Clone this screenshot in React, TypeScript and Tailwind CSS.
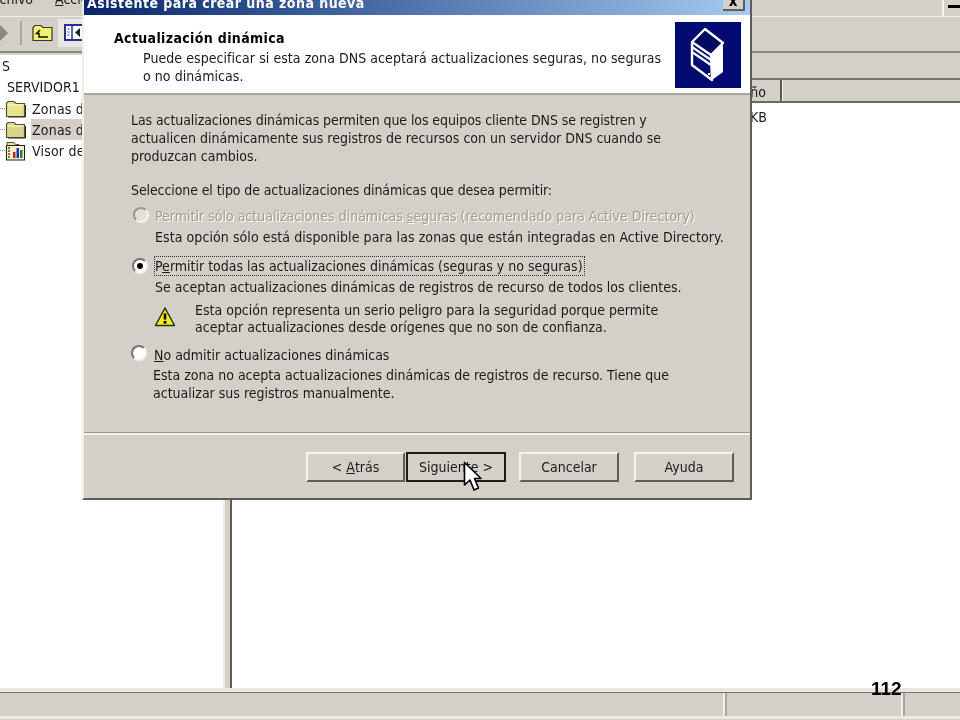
const face = "font-['DejaVu_Sans',sans-serif] [font-stretch:condensed]";

function Folder({ selected }: { selected?: boolean }) {
  return (
    <svg width="21" height="18" viewBox="0 0 21 18" className="shrink-0">
      <path d="M1.5 16.5V3.5L3 1.5h6l2 2h8.5v13z" fill={selected ? '#d8d68a' : '#e6e48c'} stroke="#55533a" strokeWidth="1.2" />
      <path d="M2.5 5h16" stroke="#f8f7c8" strokeWidth="1.2" />
      <path d="M20.5 5v12H3" stroke="#2c2b22" strokeWidth="1" fill="none" />
    </svg>
  );
}

function LogIcon() {
  return (
    <svg width="21" height="20" viewBox="0 0 21 20" className="shrink-0">
      <path d="M2 5V1.5h7l1.5 2H14V5" fill="#e6e48c" stroke="#55533a" />
      <rect x="1.5" y="4.5" width="18" height="14.5" fill="#f4f1d2" stroke="#222" />
      <path d="M4 6v12" stroke="#7c7a2a" strokeWidth="2" strokeDasharray="2 1" />
      <rect x="8" y="11" width="2.5" height="6" fill="#c02020" />
      <rect x="11.5" y="7" width="2.5" height="10" fill="#2030b0" />
      <rect x="15" y="9" width="2.5" height="8" fill="#208040" />
    </svg>
  );
}

function TreeRow({ label, icon, selected }: { label: string; icon: React.ReactNode; selected?: boolean }) {
  return (
    <div className="flex h-[21px] items-center">
      <span className="w-[5px] shrink-0 border-t border-dotted border-[#8a8880]" />
      {icon}
      <span className={`ml-[5px] flex h-[21px] grow items-center pl-[1px] tracking-[0.2px] ${selected ? 'bg-[#d4d0c8]' : ''}`}>{label}</span>
    </div>
  );
}

function Radio({ disabled, checked, className }: { disabled?: boolean; checked?: boolean; className?: string }) {
  return (
    <span className={`flex h-[16px] w-[16px] shrink-0 items-center justify-center rounded-full border-2 border-r-[#f4f2ec] border-b-[#f4f2ec] ${disabled ? 'border-t-[#9a978f] border-l-[#9a978f] bg-[#e4e1da]' : 'border-t-[#77746c] border-l-[#77746c] bg-white'} ${className ?? ''}`}>
      {checked && <span className="h-[6px] w-[6px] rounded-full bg-black" />}
    </span>
  );
}

function WizardButton({ children, focused, className }: { children: React.ReactNode; focused?: boolean; className?: string }) {
  return (
    <div className={`flex h-[30px] items-center justify-center border-2 bg-[#d4d0c8] text-[#1a1a1a] ${focused ? 'border-[#1c1c1c]' : 'border-t-[#f6f4ef] border-l-[#f6f4ef] border-r-[#5e5c57] border-b-[#5e5c57]'} ${className ?? ''}`}>
      {children}
    </div>
  );
}

function ServerArt() {
  return (
    <svg width="66" height="66" viewBox="0 0 66 66" className="shrink-0">
      <rect width="66" height="66" fill="#000a70" />
      <path d="M36 33L48 22V50L37 58Z" fill="#fff" />
      <path d="M30 7L48 21L36 33L17 20Z" fill="#000a60" stroke="#fff" strokeWidth="2.4" strokeLinejoin="round" />
      <path d="M17 20V43L37 58L36 33" fill="none" stroke="#fff" strokeWidth="2.4" strokeLinejoin="round" />
      <path d="M17 25L36 38M17 30L36 43" stroke="#fff" strokeWidth="2.2" />
      <rect x="33" y="51" width="2" height="2" fill="#fff" />
    </svg>
  );
}

export default function App() {
  return (
    <div className={`relative flex h-[720px] w-[960px] flex-col overflow-hidden bg-[#d4d0c8] text-[14px] leading-[18px] text-[#1a1a1a] blur-[0.35px] ${face}`}>
      {/* menu */}
      <div className="flex h-[17px] shrink-0 items-start justify-between border-b border-[#f0eee8]">
        <div className="-mt-[10px] -ml-[14px] flex gap-[22px]">
          <span><u>A</u>rchivo</span>
          <span><u>A</u>cción</span>
        </div>
        <div className="flex h-[16px] w-[18px] items-start border-l-2 border-[#f4f2ec]">
          <span className="ml-[4px] mt-[5px] h-[3px] w-[14px] bg-black" />
        </div>
      </div>

      {/* toolbar */}
      <div className="flex h-[36px] shrink-0 items-center border-b-2 border-b-[#8a8880] pb-[3px]">
        <svg width="10" height="16" viewBox="0 0 10 16" className="-ml-[1px]">
          <path d="M1 0L9 8L1 16V11H-2V5H1Z" fill="#8a8880" />
        </svg>
        <span className="ml-[11px] h-[24px] w-[2px] bg-[#a9a69e]" />
        <svg width="21" height="18" viewBox="0 0 21 18" className="ml-[10px]">
          <path d="M1 16.5V3.5L3 1.5h6l2 2h9v13z" fill="#f4f070" stroke="#333" strokeWidth="1.2" />
          <path d="M8 6L4.5 9.5H7V13H16" fill="none" stroke="#111" strokeWidth="1.5" />
        </svg>
        <div className="ml-[5px] flex h-[28px] w-[26px] items-center justify-end bg-[#e9e7e1]">
          <svg width="20" height="17" viewBox="0 0 20 17">
            <rect x="1" y="1" width="18" height="15" fill="#fff" stroke="#2a2f9a" strokeWidth="2" />
            <path d="M8 1v15" stroke="#2a2f9a" strokeWidth="1.5" />
            <path d="M16 4v9l-5-4.5z" fill="#222" />
            <path d="M3.5 5h2M3.5 8h2M3.5 11h2" stroke="#444" />
          </svg>
        </div>
      </div>

      {/* panes */}
      <div className="flex min-h-0 grow">
        <div className="w-[223px] shrink-0 border-t-2 border-[#d4d0c8] bg-white pt-[1px]">
          <div className="h-[21px] pl-[2px] pt-[1px]">S</div>
          <div className="h-[21px] pl-[7px] pt-[1px]">SERVIDOR1</div>
          <TreeRow label="Zonas de búsqueda" icon={<Folder />} />
          <TreeRow label="Zonas de búsqueda" icon={<Folder selected />} selected />
          <TreeRow label="Visor de sucesos" icon={<LogIcon />} />
        </div>
        <div className="w-[9px] shrink-0 border-l-2 border-r-2 border-l-[#f0eee8] border-r-[#5e5c57]" />
        <div className="flex grow flex-col">
          <div className="h-[25px] shrink-0" />
          <div className="flex h-[25px] shrink-0 border-y-2 border-t-[#77746c] border-b-[#6b6963]">
            <div className="flex w-[550px] items-center justify-end border-r-2 border-r-[#5e5c57] pr-[14px] pt-[3px]">Tamaño</div>
            <div className="grow border-l border-[#f4f2ec]" />
          </div>
          <div className="grow bg-white pt-[5px]">
            <div className="w-[550px] pr-[15px] text-right">4 KB</div>
          </div>
        </div>
      </div>

      {/* status bar */}
      <div className="flex h-[32px] shrink-0 flex-col border-t-[4px] border-[#e9e7e1]">
        <div className="flex h-[24px] border-t border-[#77746c]">
          <div className="w-[725px] border-r-2 border-[#f0eee8]" />
          <div className="w-[178px] border-x-2 border-x-[#a9a69e] border-r-[#f0eee8]" />
          <div className="grow border-l-2 border-[#a9a69e]" />
        </div>
        <div className="h-[3px] bg-[#ece9e3]" />
      </div>

      {/* slide number */}
      <span className="absolute left-[871px] top-[680px] font-['Liberation_Sans',sans-serif] text-[19px] leading-[18px] font-bold text-black [font-stretch:normal]">112</span>

      {/* wizard dialog */}
      <div className="absolute left-[82px] top-[-10px] flex h-[510px] w-[670px] flex-col border-2 border-t-[#f0eee8] border-l-[#f0eee8] border-r-[#5e5c57] border-b-[#5e5c57] bg-[#d4d0c8]">
        <div className="flex h-[23px] shrink-0 items-start justify-between bg-gradient-to-r from-[#0a246a] to-[#a6caf0] pl-[3px] pr-[5px]">
          <span className="mt-[2px] text-[14px] font-bold tracking-[0.47px] text-white">Asistente para crear una zona nueva</span>
          <div className="mt-[-4px] flex h-[23px] w-[22px] items-end justify-center border-r-2 border-b-2 border-[#5e5c57] bg-[#d4d0c8] pb-[1px] text-[15px] leading-[14px] font-bold text-black">x</div>
        </div>
        <div className="flex h-[80px] shrink-0 items-start justify-between border-b-2 border-b-[#a9a69e] bg-white pl-[30px] pr-[9px] pt-[7px]">
          <div className="pt-[7px]">
            <div className="font-bold leading-[18px] tracking-[0.35px] text-black">Actualización dinámica</div>
            <div className="ml-[29px] mt-[2px] tracking-[0.06px]">
              Puede especificar si esta zona DNS aceptará actualizaciones seguras, no seguras
              <br />
              o no dinámicas.
            </div>
          </div>
          <ServerArt />
        </div>
        <div className="grow pl-[47px]">
          <p className="mt-[16px]">
            <span className="tracking-[-0.08px]">Las actualizaciones dinámicas permiten que los equipos cliente DNS se registren y</span>
            <br />
            actualicen dinámicamente sus registros de recursos con un servidor DNS cuando se
            <br />
            produzcan cambios.
          </p>
          <p className="mt-[16px] tracking-[-0.1px]">Seleccione el tipo de actualizaciones dinámicas que desea permitir:</p>

          <div className="mt-[8px] flex items-center">
            <Radio disabled className="ml-[2px] -translate-y-px" />
            <span className="ml-[6px] text-[#a09c94] [text-shadow:1px_1px_0_#fff]">
              Permitir sólo actualizaciones dinámicas <u>s</u>eguras (recomendado para Active Directory)
            </span>
          </div>
          <p className="ml-[24px] mt-[3px] tracking-[0.08px]">Esta opción sólo está disponible para las zonas que están integradas en Active Directory.</p>

          <div className="mt-[10px] flex items-center">
            <Radio checked className="ml-[1px]" />
            <span className="ml-[6px] border border-dotted border-[#333] pr-[1px]">
              P<u>e</u>rmitir todas las actualizaciones dinámicas (seguras y no seguras)
            </span>
          </div>
          <p className="ml-[24px] mt-[2px]">Se aceptan actualizaciones dinámicas de registros de recurso de todos los clientes.</p>

          <div className="ml-[23px] mt-[4px] flex items-center">
            <svg width="22" height="22" viewBox="0 0 22 22" className="-mt-[2px] shrink-0">
              <path d="M11 2L20.5 19.5H1.5Z" fill="#f5ee1a" stroke="#2a2a10" strokeWidth="1.5" strokeLinejoin="round" />
              <path d="M11 7.5V13.5" stroke="#000" strokeWidth="2.6" />
              <rect x="9.6" y="15" width="2.8" height="2.6" fill="#000" />
            </svg>
            <p className="ml-[19px] pt-[2px] leading-[17px]">
              Esta opción representa un serio peligro para la seguridad porque permite
              <br />
              aceptar actualizaciones desde orígenes que no son de confianza.
            </p>
          </div>

          <div className="mt-[9px] flex items-start">
            <Radio />
            <span className="ml-[7px] mt-[1px]"><u>N</u>o admitir actualizaciones dinámicas</span>
          </div>
          <p className="ml-[22px] mt-[2px]">
            Esta zona no acepta actualizaciones dinámicas de registros de recurso. Tiene que
            <br />
            actualizar sus registros manualmente.
          </p>
        </div>
        <div className="flex h-[65px] shrink-0 items-start border-t-2 border-t-[#f4f2ec] pt-[17px] pl-[222px] shadow-[0_-1px_0_#9a978f]">
          <WizardButton className="w-[99px]">&lt;&nbsp;<u>A</u>trás</WizardButton>
          <WizardButton focused className="ml-[1px] w-[100px]">Siguiente &gt;</WizardButton>
          <WizardButton className="ml-[13px] w-[100px]">Cancelar</WizardButton>
          <WizardButton className="ml-[15px] w-[100px]">Ayuda</WizardButton>
        </div>
      </div>

      {/* mouse pointer */}
      <svg width="22" height="32" viewBox="0 0 22 32" className="absolute left-[463px] top-[461px]">
        <path d="M1.5 1.5V24L7 19L11 29L15.5 27L11.5 17.5H18Z" fill="#fff" stroke="#000" strokeWidth="1.6" strokeLinejoin="round" />
      </svg>
    </div>
  );
}
